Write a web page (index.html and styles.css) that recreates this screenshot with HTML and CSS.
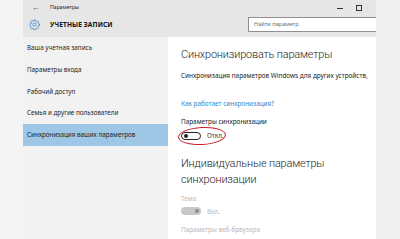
FILE: index.html
```html
<!DOCTYPE html>
<html lang="ru">
<head>
<meta charset="utf-8">
<link rel="stylesheet" href="styles.css">
</head>
<body>
<div class="screen">
  <div class="gutter-left"></div>
  <div class="window">
    <div class="titlebar">
      <div class="row1">
        <span class="back">&#8592;</span>
        <span class="apptitle">Параметры</span>
        <span class="controls">
          <span class="min"></span>
          <span class="max"></span>
        </span>
      </div>
      <div class="row2">
        <svg class="gear" width="11" height="11" viewBox="0 0 24 24">
          <path d="M10.3 2h3.4l.5 2.6a8 8 0 0 1 2 .9l2.2-1.5 2.4 2.4-1.5 2.2a8 8 0 0 1 .9 2l2.6.5v3.4l-2.6.5a8 8 0 0 1-.9 2l1.5 2.2-2.4 2.4-2.2-1.5a8 8 0 0 1-2 .9l-.5 2.6h-3.4l-.5-2.6a8 8 0 0 1-2-.9l-2.2 1.5-2.4-2.4 1.5-2.2a8 8 0 0 1-.9-2L2 13.7v-3.4l2.6-.5a8 8 0 0 1 .9-2L4 5.6 6.4 3.2l2.2 1.5a8 8 0 0 1 2-.9z" fill="none" stroke="#2b78c8" stroke-width="1.6" stroke-linejoin="round"/>
          <circle cx="12" cy="12" r="3.6" fill="none" stroke="#2b78c8" stroke-width="1.6"/>
        </svg>
        <span class="section">УЧЕТНЫЕ ЗАПИСИ</span>
        <div class="search">Найти параметр</div>
      </div>
    </div>
    <div class="main">
      <nav class="sidebar">
        <div class="item">Ваша учетная запись</div>
        <div class="item">Параметры входа</div>
        <div class="item">Рабочий доступ</div>
        <div class="item">Семья и другие пользователи</div>
        <div class="item active">Синхронизация ваших параметров</div>
      </nav>
      <section class="content">
        <h1 class="h">Синхронизировать параметры</h1>
        <p class="desc">Синхронизация параметров Windows для других устройств,</p>
        <a class="link">Как работает синхронизация?</a>
        <p class="label">Параметры синхронизации</p>
        <div class="toggle-row marked">
          <span class="toggle off"><span class="knob"></span></span>
          <span class="state">Откл.</span>
          <span class="ring"></span>
        </div>
        <h2 class="h h2">Индивидуальные параметры синхронизации</h2>
        <p class="label dim first">Тема</p>
        <div class="toggle-row dim-row">
          <span class="toggle on"><span class="knob"></span></span>
          <span class="state dim">Вкл.</span>
        </div>
        <p class="label dim last">Параметры веб-браузера</p>
      </section>
    </div>
  </div>
  <div class="gutter-right"></div>
</div>
</body>
</html>
```
FILE: styles.css
```css
* { box-sizing: border-box; }
html, body { margin: 0; padding: 0; }
body {
  width: 400px;
  height: 239px;
  overflow: hidden;
  background: #f4f4f4;
  font-family: "Noto Sans", "Open Sans", sans-serif;
  color: #1e1e1e;
}
.screen { display: flex; width: 400px; height: 239px; }
.gutter-left { width: 23px; background: #f4f4f4; }
.gutter-right { width: 24px; background: #efefef; }
.window { width: 353px; display: flex; flex-direction: column; }
.titlebar { height: 37px; background: #e6e6e6; display: flex; flex-direction: column; }
.row1 { height: 13px; display: flex; align-items: center; }
.back { width: 27px; padding-left: 9px; font-size: 8px; line-height: 13px; color: #333; }
.apptitle { font-size: 5.2px; color: #222; }
.controls { margin-left: auto; display: flex; align-items: center; gap: 13px; padding-right: 14px; padding-top: 3px; }
.min { width: 6px; height: 1px; background: #333; }
.max { width: 6px; height: 6px; border: 1px solid #333; }
.row2 { flex: 1; display: flex; align-items: center; }
.gear { margin-left: 6px; margin-right: 10px; margin-top: -1px; }
.section { font-size: 6.6px; font-weight: 700; color: #111; letter-spacing: 0.1px; margin-top: -1px; }
.search {
  margin-left: auto;
  width: 128px;
  height: 15px;
  margin-top: -1px;
  background: #fff;
  border: 1px solid #8f8f8f;
  border-right: none;
  font-size: 5.6px;
  line-height: 13px;
  color: #707070;
  padding-left: 5px;
}
.main { flex: 1; display: flex; }
.sidebar { width: 145px; background: #f2f2f2; display: flex; flex-direction: column; }
.item { height: 21.75px; line-height: 21.75px; font-size: 6.3px; padding-left: 4px; color: #1e1e1e; white-space: nowrap; }
.item.active { background: #9ec6e7; }
.content { flex: 1; background: #fff; padding: 10px 0 0 13px; display: flex; flex-direction: column; align-items: flex-start; }
.h { margin: 0; font-family: Roboto, "Noto Sans", sans-serif; font-size: 10.9px; font-weight: 300; letter-spacing: -0.15px; line-height: 16px; color: #1e1e1e; white-space: nowrap; }
.h2 { white-space: normal; width: 150px; margin-top: 15px; }
.desc { margin: 8px 0 0; font-size: 6.4px; line-height: 9px; white-space: nowrap; color: #222; }
.link { margin-top: 18.5px; font-size: 6.4px; line-height: 9px; color: #2f86d0; }
.label { margin: 9.5px 0 0; font-size: 6.4px; line-height: 9px; color: #222; white-space: nowrap; }
.label.dim { color: #b8b8b8; }
.label.first { margin-top: 6px; }
.label.last { margin-top: 9px; }
.toggle-row { margin-top: 4.7px; height: 10px; display: flex; align-items: center; gap: 6px; position: relative; padding-left: 0; }
.dim-row { margin-top: 3.7px; }
.toggle { width: 20px; height: 8px; border-radius: 4px; display: flex; align-items: center; padding: 0 2px; }
.toggle.off { border: 1px solid #222; }
.toggle.off .knob { width: 4px; height: 4px; border-radius: 50%; background: #222; }
.toggle.on { background: #c8c8c8; justify-content: flex-end; }
.toggle.on .knob { width: 4px; height: 4px; border-radius: 50%; background: #8c8c8c; }
.state { font-size: 6.4px; line-height: 9px; color: #333; }
.state.dim { color: #b8b8b8; }
.ring {
  position: absolute;
  left: -3px;
  top: -4px;
  width: 48px;
  height: 18px;
  border: 1.4px solid #cc1f2a;
  border-radius: 50%;
  transform: rotate(-3deg);
}
```
